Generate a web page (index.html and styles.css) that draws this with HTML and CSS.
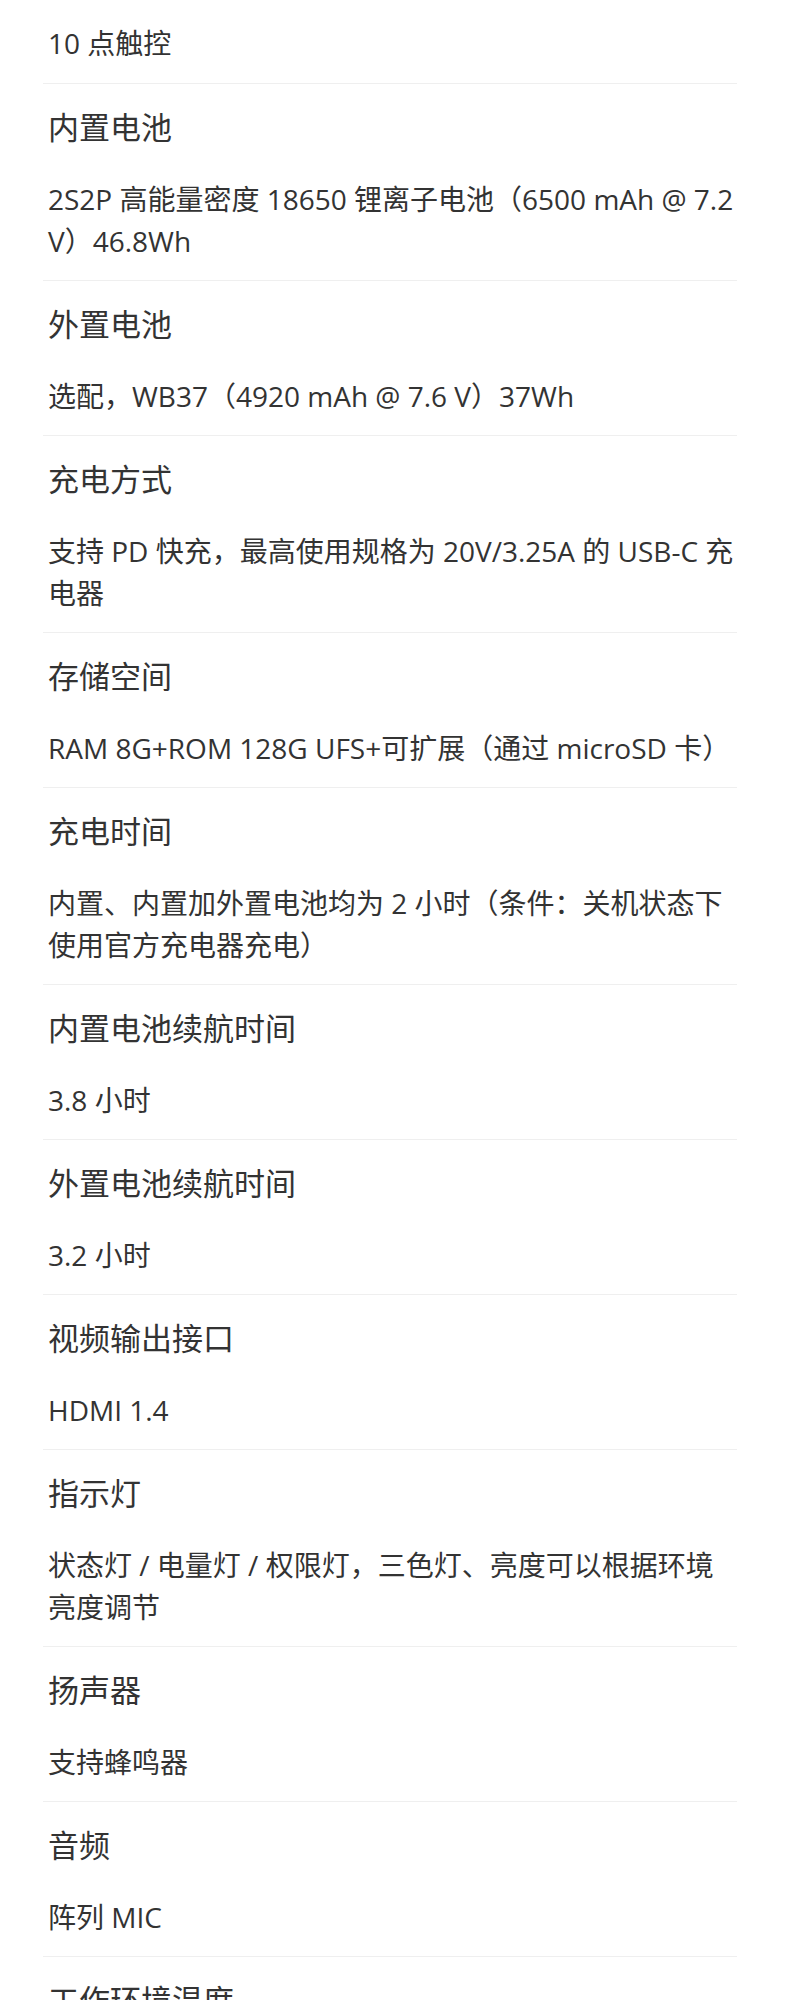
FILE: index.html
```html
<!DOCTYPE html>
<html lang="zh-CN">
<head>
<meta charset="utf-8">
<title>规格参数</title>
<link rel="stylesheet" href="styles.css">
</head>
<body>
<main class="specs">
  <section class="spec spec-first">
    <p class="spec-value">10 点触控</p>
  </section>
  <section class="spec">
    <h3 class="spec-name">内置电池</h3>
    <p class="spec-value">2S2P 高能量密度 18650 锂离子电池（6500 mAh @ 7.2 V）46.8Wh</p>
  </section>
  <section class="spec">
    <h3 class="spec-name">外置电池</h3>
    <p class="spec-value">选配，WB37（4920 mAh @ 7.6 V）37Wh</p>
  </section>
  <section class="spec">
    <h3 class="spec-name">充电方式</h3>
    <p class="spec-value">支持 PD 快充，最高使用规格为 20V/3.25A 的 USB-C 充电器</p>
  </section>
  <section class="spec">
    <h3 class="spec-name">存储空间</h3>
    <p class="spec-value">RAM 8G+ROM 128G UFS+可扩展（通过 microSD 卡）</p>
  </section>
  <section class="spec">
    <h3 class="spec-name">充电时间</h3>
    <p class="spec-value">内置、内置加外置电池均为 2 小时（条件：关机状态下使用官方充电器充电）</p>
  </section>
  <section class="spec">
    <h3 class="spec-name">内置电池续航时间</h3>
    <p class="spec-value">3.8 小时</p>
  </section>
  <section class="spec">
    <h3 class="spec-name">外置电池续航时间</h3>
    <p class="spec-value">3.2 小时</p>
  </section>
  <section class="spec">
    <h3 class="spec-name">视频输出接口</h3>
    <p class="spec-value">HDMI 1.4</p>
  </section>
  <section class="spec">
    <h3 class="spec-name">指示灯</h3>
    <p class="spec-value">状态灯 / 电量灯 / 权限灯，三色灯、亮度可以根据环境亮度调节</p>
  </section>
  <section class="spec">
    <h3 class="spec-name">扬声器</h3>
    <p class="spec-value">支持蜂鸣器</p>
  </section>
  <section class="spec">
    <h3 class="spec-name">音频</h3>
    <p class="spec-value">阵列 MIC</p>
  </section>
  <section class="spec">
    <h3 class="spec-name">工作环境温度</h3>
    <p class="spec-value">-20°C ~ 50°C</p>
  </section>
</main>
</body>
</html>
```

FILE: styles.css
```css
html, body {
  margin: 0;
  padding: 0;
  background: #ffffff;
}

body {
  font-family: "Open Sans", "Noto Sans CJK SC", sans-serif;
  color: #333333;
}

.specs {
  margin: 0 53px 0 43px;
  display: flex;
  flex-direction: column;
}

.spec {
  display: flex;
  flex-direction: column;
  gap: 30px;
  padding: 22px 0 18px 5px;
  border-bottom: 1px solid #efefef;
}

.spec-first {
  padding-bottom: 19px;
}

.spec-name {
  margin: 0;
  font-size: 31px;
  font-weight: 400;
  line-height: 42px;
  color: #333333;
}

.spec-value {
  margin: 0;
  font-size: 28px;
  font-weight: 400;
  line-height: 42px;
  color: #333333;
}

.spec-value .sep {
  padding: 0 2px;
}
```
